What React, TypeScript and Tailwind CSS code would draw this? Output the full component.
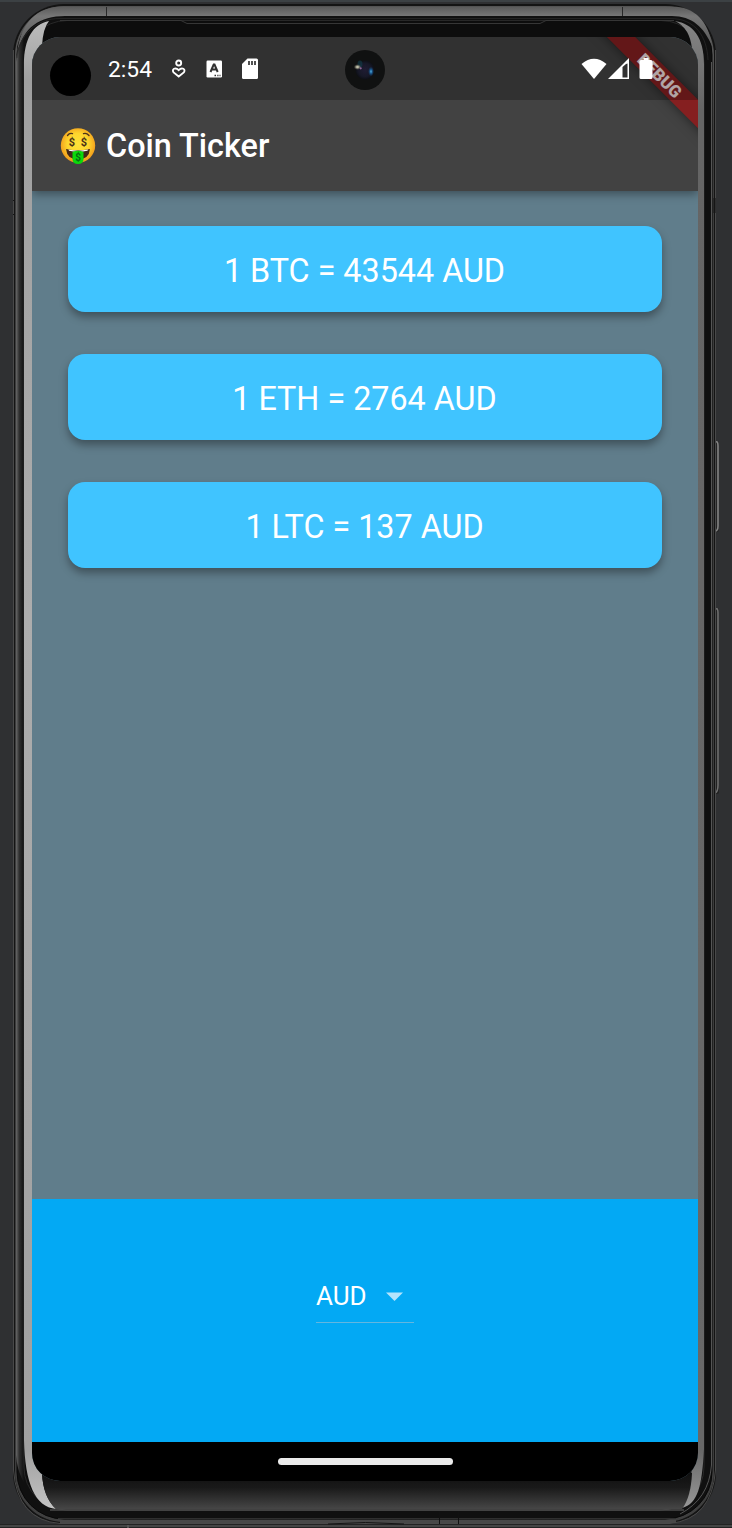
import React from "react";

function PhoneFrame() {
  return (
    <svg className="absolute inset-0" width="732" height="1528" viewBox="0 0 732 1528" aria-hidden="true">
      <defs>
        <linearGradient id="rim" x1="0" y1="0" x2="0" y2="1528" gradientUnits="userSpaceOnUse">
          <stop offset="0" stopColor="#4b4b4b" />
          <stop offset="0.03" stopColor="#555" />
          <stop offset="0.09" stopColor="#3c3c3c" />
          <stop offset="0.95" stopColor="#3c3c3c" />
          <stop offset="1" stopColor="#404040" />
        </linearGradient>
        <linearGradient id="chin" x1="0" y1="0" x2="0" y2="1">
          <stop offset="0" stopColor="#101010" />
          <stop offset="0.4" stopColor="#191919" />
          <stop offset="1" stopColor="#464646" />
        </linearGradient>
        <linearGradient id="leftGlow" x1="0" y1="20" x2="0" y2="1510" gradientUnits="userSpaceOnUse">
          <stop offset="0" stopColor="#bdbdbd" />
          <stop offset="0.04" stopColor="#a0a0a0" />
          <stop offset="0.4" stopColor="#adadad" />
          <stop offset="0.96" stopColor="#a0a0a0" />
          <stop offset="1" stopColor="#c4c4c4" />
        </linearGradient>
        <linearGradient id="rightGlow" x1="0" y1="20" x2="0" y2="1510" gradientUnits="userSpaceOnUse">
          <stop offset="0" stopColor="#858585" />
          <stop offset="0.06" stopColor="#656565" />
          <stop offset="0.96" stopColor="#686868" />
          <stop offset="1" stopColor="#999" />
        </linearGradient>
        <linearGradient id="leftSide" x1="16" y1="0" x2="24" y2="0" gradientUnits="userSpaceOnUse">
          <stop offset="0" stopColor="#686868" />
          <stop offset="0.4" stopColor="#303030" />
          <stop offset="1" stopColor="#101010" />
        </linearGradient>
        <linearGradient id="crown" x1="0" y1="6" x2="0" y2="50" gradientUnits="userSpaceOnUse">
          <stop offset="0" stopColor="#585858" />
          <stop offset="0.23" stopColor="#777" />
          <stop offset="1" stopColor="#555" />
        </linearGradient>
      </defs>
      <rect width="732" height="1528" fill="#2f3032" />
      <rect width="732" height="2" fill="#3c4144" />
      <rect y="1524" width="732" height="4" fill="#232323" />
      <rect y="1525" width="732" height="2" fill="#454545" />
      <rect x="127" y="1525" width="2" height="3" fill="#555" />
      <rect x="713" y="441" width="6" height="91" rx="2" fill="#242424" />
      <path d="M716 442Q718 441 718 446V526Q718 531 715 531" fill="none" stroke="#858585" strokeWidth="1.600" />
      <rect x="713" y="608" width="6" height="186" rx="2" fill="#222" />
      <path d="M716 609Q718 608 718 613V785Q718 792 715 793" fill="none" stroke="#707070" strokeWidth="1.600" />
      <rect x="13" y="4" width="703" height="1520" rx="51" fill="#141414" />
      <path d="M13.500 50V1470Q17 1520 60 1523.500H670Q712 1519 715.500 1470V50" fill="none" stroke="#494949" />
      <rect x="15" y="6" width="699" height="1516" rx="49" fill="url(#rim)" />
      <rect x="17" y="8" width="695" height="1511" rx="47" fill="#101010" stroke="#080808" />
      <path d="M17 54C20 22 38 6.500 62 6.500H672C695 6.500 709 22 712 46C704 27 692 16 672 16H65C40 16 23 27 17 54Z" fill="url(#crown)" />
      <path d="M106.500 7V16M622.500 7V16" stroke="#282828" />
      <path d="M16 62Q17 48 25 36Q23 48 24 73V1440Q25 1474 36 1496Q18 1482 16 1455Z" fill="url(#leftSide)" />
      <path d="M711.500 62V1465Q709 1499 680 1514" fill="none" stroke="#555" />
      <path d="M17 58C19 35 36 18.500 60 18.500H670C696 18.500 707 37 708 60" fill="none" stroke="#2c2c2c" strokeWidth="0.700" />
      <rect x="24" y="20.500" width="680" height="1489.500" rx="43" fill="#0d0d0d" stroke="#333" strokeWidth="0.700" />
      <path d="M49 21C33 24 24 39 24 64V1440C25 1483 35 1507 56 1509Q43 1497 42 1473V46Q43 28 49 21Z" fill="url(#leftGlow)" />
      <path d="M675 21C693 24 704 37 704 64V1449C702 1486 698 1504 682 1508Q691 1491 692 1465V49Q690 28 675 21Z" fill="url(#rightGlow)" />
      <path d="M60 20.500H181L187 23.500H540L546 20.500H674" fill="none" stroke="#363636" />
      <path d="M42 1473H692Q691 1497 682 1509H56Q43 1497 42 1473Z" fill="url(#chin)" />
      <path d="M50 1510H684" stroke="#686868" />
      <path d="M58 1518.500H676" stroke="#303030" />
      <path d="M60 1521.500H676" stroke="#484848" strokeWidth="3" />
      <path d="M328 1524Q365 1521 404 1524" fill="none" stroke="#151515" />
      <path d="M439.500 1511V1524M458.500 1511V1524" stroke="#111" />
      <path d="M13 200.500H15M13 214.500H15" stroke="#151515" />
      <path d="M714.500 198V213" stroke="#151515" strokeWidth="2" />
    </svg>
  );
}

function MoneyFace() {
  return (
    <svg width="37" height="37" viewBox="0 0 37 37" aria-label="Money-mouth face">
      <defs>
        <radialGradient id="face" cx="50%" cy="46%" r="52%">
          <stop offset="0" stopColor="#ffe239" />
          <stop offset="0.6" stopColor="#fdd52d" />
          <stop offset="1" stopColor="#f29e1d" />
        </radialGradient>
      </defs>
      <circle cx="18" cy="18.500" r="17.200" fill="url(#face)" />
      <path d="M7.500 8.500Q9.500 5.700 12.500 6.700M23.500 6.700Q26.500 5.700 29 8.500" fill="none" stroke="#4b321b" strokeWidth="1.300" strokeLinecap="round" />
      <path d="M6 22Q18 24.500 30 22Q29 32.500 18 32.500Q7 32.500 6 22Z" fill="#432719" />
      <path d="M8.500 22.600Q18 24.800 28 22.600L27.500 23.800Q18 26 9 23.800Z" fill="#fff" />
      <path d="M12.500 25Q18 22.700 23.500 25V32Q23.500 37 18 37Q12.500 37 12.500 32Z" fill="#0bd80b" />
      <g fill="#493017" fontFamily="Roboto, sans-serif" fontWeight="700" textAnchor="middle">
        <text x="12" y="18.500" fontSize="11">$</text>
        <text x="24" y="18.500" fontSize="11">$</text>
        <text x="18" y="34" fontSize="10" fill="#056e12">$</text>
      </g>
    </svg>
  );
}

function StatusBar() {
  return (
    <div className="relative z-20 flex h-[63px] shrink-0 items-center bg-black/25 pl-[18px] text-white">
      <div className="mt-[13px] size-[41px] rounded-full bg-black" />
      <span className="ml-[17px] mt-[2px] w-[46px] whitespace-nowrap text-[22.8px] leading-[28px]">2:54</span>
      <svg className="ml-[16px]" width="16" height="20" viewBox="0 0 16 20" fill="none" stroke="white" strokeWidth="1.900">
        <circle cx="8.700" cy="4" r="2.500" />
        <path d="M8.700 17.500L3.600 13.400C1.300 10.300 5.300 7.600 8.700 11.200C12.100 7.600 16.100 10.300 13.800 13.400Z" />
      </svg>
      <svg className="ml-[20px]" width="17" height="18" viewBox="0 0 17 18">
        <rect x="0.500" y="0.500" width="15.500" height="17" rx="1.200" fill="white" />
        <path d="M4.500 12L7.700 4.500H8.500L11.700 12M5.700 9.500H10.500" stroke="#323232" strokeWidth="2" fill="none" />
        <path d="M8.500 15.500H10M11.300 15.500H12.500M13.500 15.500H14.500" stroke="#323232" strokeWidth="1.400" />
      </svg>
      <svg className="ml-[18px]" width="18" height="22" viewBox="0 0 18 22">
        <path d="M6.500 0.500H15.500Q17 0.500 17 2V19.500Q17 21 15.500 21H2.500Q1 21 1 19.500V6Z" fill="white" />
        <path d="M8 3V7M11 3V7M14 3V7" stroke="#323232" strokeWidth="1.700" />
      </svg>
      <div className="ml-[86px] mt-[3px] flex size-[40px] items-center justify-center rounded-full bg-[#101111]">
        <svg width="24" height="24" viewBox="0 0 24 24">
          <defs>
            <radialGradient id="lens">
              <stop offset="0" stopColor="#1f1c33" />
              <stop offset="0.7" stopColor="#171827" />
              <stop offset="1" stopColor="#0d0f15" />
            </radialGradient>
            <radialGradient id="glint">
              <stop offset="0" stopColor="#dddcc4" />
              <stop offset="0.4" stopColor="#969582" />
              <stop offset="1" stopColor="#303432" stopOpacity="0" />
            </radialGradient>
            <radialGradient id="blueGlint">
              <stop offset="0" stopColor="#5eb5dc" />
              <stop offset="0.35" stopColor="#1c619b" />
              <stop offset="1" stopColor="#103c68" stopOpacity="0" />
            </radialGradient>
          </defs>
          <circle cx="12" cy="12" r="9.500" fill="url(#lens)" />
          <ellipse cx="18" cy="13.500" rx="3" ry="5" fill="url(#blueGlint)" />
          <ellipse cx="7" cy="6" rx="2.500" ry="3.500" fill="#12404d" opacity="0.6" />
          <ellipse cx="4.500" cy="9" rx="4" ry="3" fill="url(#glint)" />
          <circle cx="7.700" cy="10.300" r="1.100" fill="#8d6595" />
        </svg>
      </div>
      <svg className="ml-[196px]" width="26" height="22" viewBox="0 0 26 22">
        <path d="M0.500 6Q13 -4.500 25.500 6L13 21Z" fill="white" />
      </svg>
      <svg className="ml-[1px]" width="22" height="22" viewBox="0 0 22 22">
        <path d="M0 21L21 0V21ZM14.500 9V19.500H19.500V5.500L18 6Z" fill="white" fillRule="evenodd" />
      </svg>
      <svg className="ml-[9px]" width="14" height="23" viewBox="0 0 14 23">
        <path d="M4.500 1H9.500V3H12Q13.500 3 13.500 4.500V20.500Q13.500 22 12 22H2Q0.500 22 0.500 20.500V4.500Q0.500 3 2 3H4.500Z" fill="white" />
      </svg>
    </div>
  );
}

const rates = ["1 BTC = 43544 AUD", "1 ETH = 2764 AUD", "1 LTC = 137 AUD"];

export default function App() {
  return (
    <div className="relative h-[1528px] w-[732px] overflow-hidden bg-[#2f3032] pl-[32px] pt-[37px] font-[Roboto,sans-serif]">
      <PhoneFrame />
      <main className="relative flex h-[1444px] w-[666px] flex-col overflow-hidden rounded-[28px] bg-[#607d8b]">
        <header className="relative h-[154px] shrink-0 bg-[#424242] shadow-[0_3px_9px_rgba(0,0,0,0.38)]">
          <StatusBar />
          <div className="flex h-[91px] items-center pl-[28px]">
            <MoneyFace />
            <h1 className="ml-[9px] whitespace-nowrap text-[32.4px] font-medium leading-[40px] text-white">Coin Ticker</h1>
          </div>
          <div className="absolute left-[508px] top-[29px] z-10 flex h-[20px] w-[240px] rotate-45 items-center justify-center bg-[#851f20] pr-px text-[17px] font-black leading-[20px] text-white/85 shadow-[0_0_12px_rgba(0,0,0,0.5)]">
            DEBUG
          </div>
        </header>
        <section className="flex grow flex-col gap-[42px] px-[36px] pt-[35px]">
          {rates.map((rate) => (
            <div key={rate} className="flex h-[86px] items-center justify-center rounded-[17px] bg-[#40c4ff] pr-px pt-[4px] text-[32.3px] leading-[40px] text-white shadow-[0_5px_8px_rgba(0,0,0,0.35)]">
              {rate}
            </div>
          ))}
        </section>
        <section className="flex h-[243px] shrink-0 items-start justify-center bg-[#03a9f4] pt-[71px]">
          <button className="flex h-[53px] w-[98px] items-center border-b border-[#64b6df] text-white">
            <span className="w-[50px] text-[26px] leading-[32px]">AUD</span>
            <svg className="ml-[20px]" width="17" height="9" viewBox="0 0 17 9"><path d="M0 0.500H17L8.500 9Z" fill="#b4e4fc" /></svg>
          </button>
        </section>
        <footer className="flex h-[39px] shrink-0 items-center justify-center bg-black">
          <div className="h-[7px] w-[175px] rounded-full bg-[#ebebeb]" />
        </footer>
      </main>
    </div>
  );
}
